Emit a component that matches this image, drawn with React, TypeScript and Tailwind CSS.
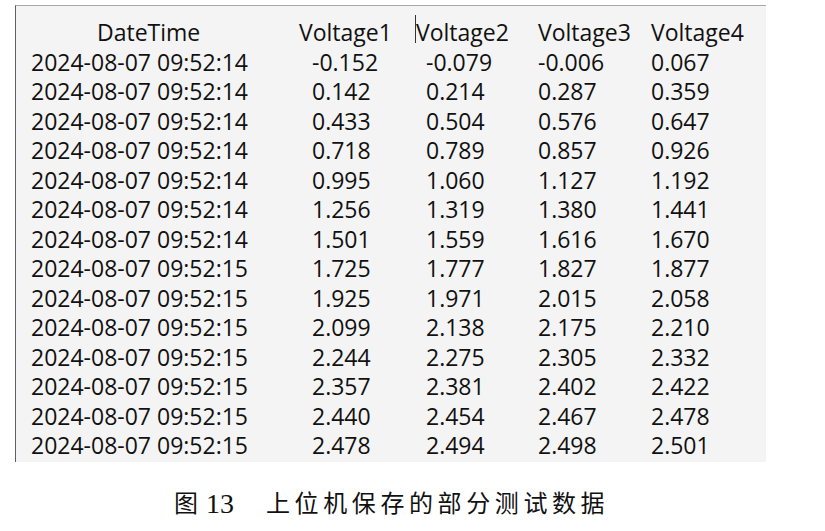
const rows: [string, string, string, string, string][] = [
  ['2024-08-07 09:52:14', '-0.152', '-0.079', '-0.006', '0.067'],
  ['2024-08-07 09:52:14', '0.142', '0.214', '0.287', '0.359'],
  ['2024-08-07 09:52:14', '0.433', '0.504', '0.576', '0.647'],
  ['2024-08-07 09:52:14', '0.718', '0.789', '0.857', '0.926'],
  ['2024-08-07 09:52:14', '0.995', '1.060', '1.127', '1.192'],
  ['2024-08-07 09:52:14', '1.256', '1.319', '1.380', '1.441'],
  ['2024-08-07 09:52:14', '1.501', '1.559', '1.616', '1.670'],
  ['2024-08-07 09:52:15', '1.725', '1.777', '1.827', '1.877'],
  ['2024-08-07 09:52:15', '1.925', '1.971', '2.015', '2.058'],
  ['2024-08-07 09:52:15', '2.099', '2.138', '2.175', '2.210'],
  ['2024-08-07 09:52:15', '2.244', '2.275', '2.305', '2.332'],
  ['2024-08-07 09:52:15', '2.357', '2.381', '2.402', '2.422'],
  ['2024-08-07 09:52:15', '2.440', '2.454', '2.467', '2.478'],
  ['2024-08-07 09:52:15', '2.478', '2.494', '2.498', '2.501'],
]

export default function App() {
  return (
    <div className="w-[825px] h-[531px] bg-white overflow-hidden">
      <div className="pl-[15px] pt-[5px]">
        {/* exported data table */}
        <div
          className="w-[751px] bg-[#f4f4f4] border-t border-t-[#a8a8a8] border-l border-l-[#606060] pt-[12px] pb-[1px] text-[23px] text-[#111]"
          style={{ fontFamily: '"Open Sans", "Noto Sans", sans-serif' }}
        >
          <div className="grid grid-cols-[280px_117px_122px_113px_119px] h-[29.5px] items-center leading-none">
            <span className="pl-[81px]">DateTime</span>
            <span className="pl-[3px]">Voltage1</span>
            <span className="relative pl-[3px]">
              <span className="absolute left-[2px] top-[-6px] w-px h-[28px] bg-[#333]" />
              Voltage2
            </span>
            <span className="pl-[3px]">Voltage3</span>
            <span className="pl-[3px]">Voltage4</span>
          </div>
          {rows.map((r, i) => (
            <div
              key={i}
              className="grid grid-cols-[280px_117px_122px_113px_119px] h-[29.5px] items-center leading-none"
            >
              <span className="pl-[15px]">{r[0]}</span>
              <span className="pl-[16px]">{r[1]}</span>
              <span className="pl-[13px]">{r[2]}</span>
              <span className="pl-[3px]">{r[3]}</span>
              <span className="pl-[3px]">{r[4]}</span>
            </div>
          ))}
        </div>
      </div>
      <div
        className="mt-[28px] pl-[174px] flex items-center text-[24px] leading-none text-[#111]"
        style={{ fontFamily: '"Liberation Serif", "Noto Sans CJK SC", serif' }}
      >
        <span>图</span>
        <span className="ml-[8px] text-[28px]">13</span>
        <span className="ml-[32px] tracking-[4.6px]">上位机保存的部分测试数据</span>
      </div>
    </div>
  )
}
